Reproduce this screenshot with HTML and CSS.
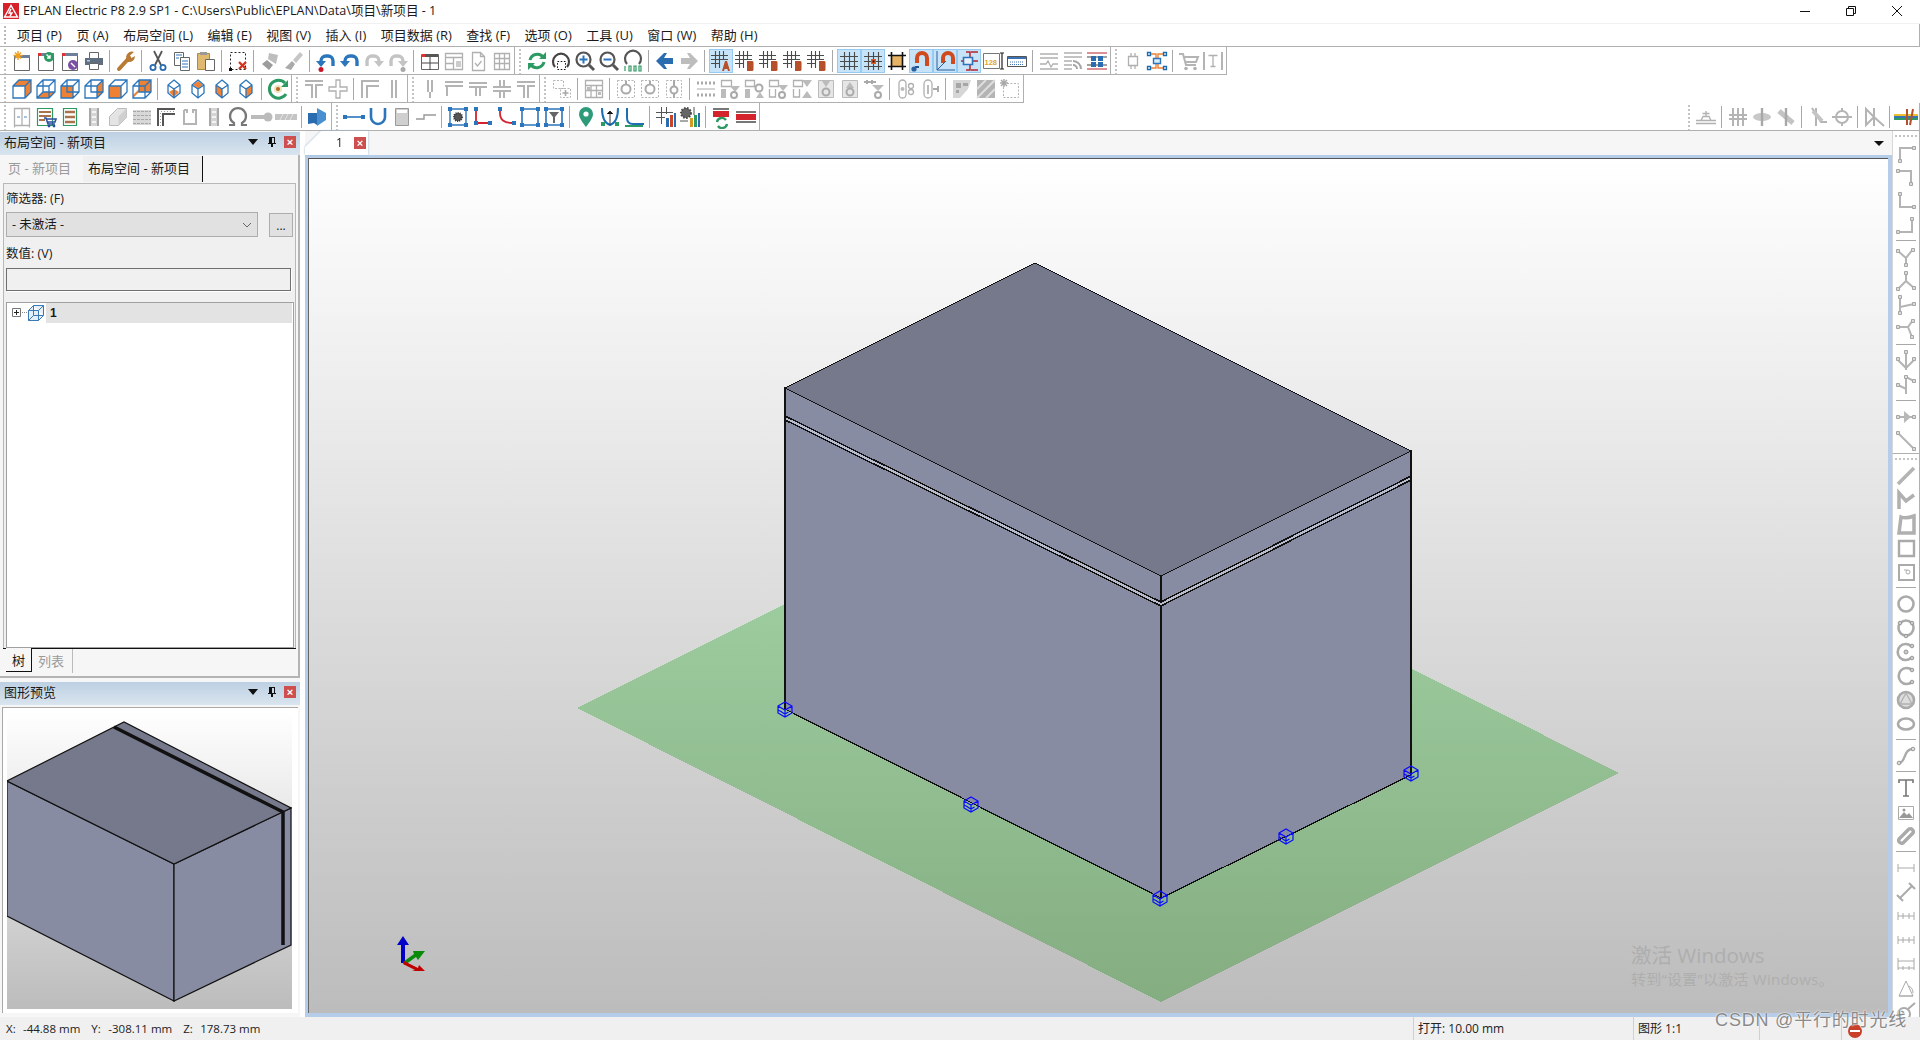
FILE: index.html
```html
<!DOCTYPE html>
<html lang="zh">
<head>
<meta charset="utf-8">
<title>EPLAN Electric P8</title>
<link rel="stylesheet" href="styles.css">
</head>
<body>
<svg class="defs" aria-hidden="true">
<defs>
<symbol id="new" viewBox="0 0 24 24"><path class="wf" d="M4.500 6.500h15v15h-15z"/><path fill="#6d7f99" d="M4 6h16v3H4z"/><path stroke="#f0a020" stroke-width="1.400" d="M8 2v9M3.500 6.500h9M5 3.500l6 6M11 3.500l-6 6"/></symbol>
<symbol id="open" viewBox="0 0 24 24"><path class="wf" d="M4.500 4.500h15v17h-15z"/><path fill="#6d7f99" d="M4 4h16v3H4z"/><path fill="#d33" d="M4 4h3v3H4z"/><circle cx="15" cy="8" r="5" fill="#2d9a63"/><path stroke="#fff" stroke-width="1.400" d="M12.500 5.500L16 9m0-3v3h-3"/></symbol>
<symbol id="conf" viewBox="0 0 24 24"><path class="wf" d="M4.500 4.500h15v17h-15z"/><path fill="#6d7f99" d="M4 4h16v3H4z"/><path fill="#d33" d="M4 4h3v3H4z"/><circle cx="15" cy="16" r="5" fill="#7b4fa3"/><path stroke="#fff" stroke-width="1.400" d="M13 14l4 4"/></symbol>
<symbol id="print" viewBox="0 0 24 24"><path class="wf" d="M7.500 3.500h9v6h-9z"/><path fill="#5f6f7f" d="M3 9h18v7H3z"/><path class="wf" d="M7.500 14.500h9v6h-9z"/><path fill="#9fd0f0" d="M5 11h3v1.500H5z"/></symbol>
<symbol id="wrench" viewBox="0 0 24 24"><path fill="none" stroke="#b97a33" stroke-width="4" stroke-linecap="round" d="M5 20L15 9"/><path fill="#b97a33" d="M12 8a6 6 0 0 1 8-5l-4 3.500 1.500 2.500 3.500-2a6 6 0 0 1-7 6z"/></symbol>
<symbol id="cut" viewBox="0 0 24 24"><path stroke="#555" stroke-width="1.800" d="M8 2l7 14M16 2L9 16"/><circle cx="7" cy="18.500" r="2.600" fill="none" stroke="#2a6cb0" stroke-width="1.800"/><circle cx="17" cy="18.500" r="2.600" fill="none" stroke="#2a6cb0" stroke-width="1.800"/></symbol>
<symbol id="copy" viewBox="0 0 24 24"><path class="wf" d="M4.500 3.500h9v13h-9z"/><path class="wf" d="M10.500 8.500h9v13h-9z"/><path stroke="#2a75bb" d="M6 6h6M6 9h3M12 12h6M12 15h6M12 18h6"/></symbol>
<symbol id="paste" viewBox="0 0 24 24"><path fill="#e0b870" stroke="#b08a40" d="M3.500 4.500h12v16h-12z"/><path fill="#999" d="M6 3h7v3H6z"/><path class="wf" d="M11.500 10.500h9v11h-9z"/></symbol>
<symbol id="seldel" viewBox="0 0 24 24"><path fill="none" stroke="#222" stroke-dasharray="2 2" d="M4.500 3.500h15v17h-15z"/><path stroke="#d4341f" stroke-width="2.400" d="M13 13l7 7M20 13l-7 7"/><path fill="#111" d="M3 19h3v3H3z"/></symbol>
<symbol id="br1" viewBox="0 0 24 24"><path fill="#bdbdbd" d="M11 4l9 2-2 9-8-5z"/><path fill="#9c9c9c" d="M9 11l6 5-4 5-7-6z"/></symbol>
<symbol id="br2" viewBox="0 0 24 24"><path fill="#c6c6c6" d="M18 3l3 3-7 8-3-3z"/><path fill="#aaa" d="M10 12l3 3-4 6-6-2z"/></symbol>
<symbol id="undo" viewBox="0 0 24 24"><path fill="none" stroke="#2a75bb" stroke-width="3.400" d="M7 13v-1a5 5 0 0 1 5-5h2a5 5 0 0 1 5 5v5"/><path fill="#2a75bb" d="M2 12h10l-5 6z"/></symbol>
<symbol id="undod" viewBox="0 0 24 24"><path fill="none" stroke="#2a75bb" stroke-width="3.400" d="M7 13v-1a5 5 0 0 1 5-5h2a5 5 0 0 1 5 5v5"/><path fill="#2a75bb" d="M2 12h10l-5 6z"/><circle cx="7" cy="20.500" r="2.500" fill="#c9142a"/></symbol>
<symbol id="redo" viewBox="0 0 24 24"><path fill="none" stroke="#c4c4c4" stroke-width="3.400" d="M17 13v-1a5 5 0 0 0-5-5h-2a5 5 0 0 0-5 5v5"/><path fill="#c4c4c4" d="M22 12H12l5 6z"/></symbol>
<symbol id="redod" viewBox="0 0 24 24"><path fill="none" stroke="#c4c4c4" stroke-width="3.400" d="M17 13v-1a5 5 0 0 0-5-5h-2a5 5 0 0 0-5 5v5"/><path fill="#c4c4c4" d="M22 12H12l5 6z"/><circle cx="17" cy="20.500" r="2.500" fill="#aaa"/></symbol>
<symbol id="w1" viewBox="0 0 24 24"><path class="wf" d="M3.500 5.500h17v15h-17z"/><path fill="#555" d="M4 5h16v3H4z"/><path fill="#d33" d="M4 5h3v3H4z"/><path stroke="#444" d="M12 8v13M4 14h16"/></symbol>
<symbol id="w2" viewBox="0 0 24 24"><path class="gl1" d="M3.500 4.500h17v16h-17zM3.500 8.500h17M11.500 8.500v12M3.500 14.500h8"/><path fill="#ccc" d="M14 12h5v6h-5z"/></symbol>
<symbol id="pgchk" viewBox="0 0 24 24"><path class="gl1" d="M6.500 3.500h8l4 4v14h-12zM14.500 3.500v4h4M9 14l2.500 3 4-5"/></symbol>
<symbol id="tbl" viewBox="0 0 24 24"><path class="gl1" d="M4.500 4.500h15v16h-15zM4.500 9.500h15M4.500 14.500h15M9.500 4.500v16M14.500 4.500v16"/></symbol>
<symbol id="ref" viewBox="0 0 24 24"><path fill="none" stroke="#2d9a63" stroke-width="3" d="M5 11a7.500 7.500 0 0 1 13-3M19 13a7.500 7.500 0 0 1-13 3"/><path fill="#2d9a63" d="M21 3v7h-7zM3 21v-7h7z"/></symbol>
<symbol id="zw" viewBox="0 0 24 24"><path fill="none" stroke="#444" stroke-width="2.200" d="M6 18a8 8 0 1 1 12 0"/><path fill="none" stroke="#111" stroke-dasharray="1.600 1.600" d="M8.500 12.500h8v8h-8z"/></symbol>
<symbol id="zi" viewBox="0 0 24 24"><circle cx="10.500" cy="10.500" r="7" fill="#fff" stroke="#555" stroke-width="2.200"/><path stroke="#555" stroke-width="3" d="M16 16l5 5"/><path stroke="#2a75bb" stroke-width="2" d="M10.500 6.500v8M6.500 10.500h8"/></symbol>
<symbol id="zo" viewBox="0 0 24 24"><circle cx="10.500" cy="10.500" r="7" fill="#fff" stroke="#555" stroke-width="2.200"/><path stroke="#555" stroke-width="3" d="M16 16l5 5"/><path stroke="#2a75bb" stroke-width="2" d="M6.500 10.500h8"/></symbol>
<symbol id="z100" viewBox="0 0 24 24"><path fill="none" stroke="#555" stroke-width="2.200" d="M6 15a8 8 0 1 1 12 0"/><path stroke="#2d9a63" stroke-width="1.200" d="M4 17v5M8 17h2v5H8zM13 17h2v5h-2zM18 17h2v5h-2z" fill="none"/></symbol>
<symbol id="back" viewBox="0 0 24 24"><path fill="#2a6cb0" d="M3 12l8-8h3l-3 5h9v6h-9l3 5h-3z"/></symbol>
<symbol id="fwd" viewBox="0 0 24 24"><path fill="#bdbdbd" d="M21 12l-8-8h-3l3 5H4v6h9l-3 5h3z"/></symbol>
<symbol id="grd" viewBox="0 0 24 24"><path class="dk" d="M7.500 3v18M12.500 3v18M17.500 3v18M3 7.500h18M3 12.500h18M3 17.500h18"/></symbol>
<symbol id="ga" viewBox="0 0 24 24"><path class="dk" d="M6.500 2v17M10.500 2v17M14.500 2v8M2 6.500h17M2 10.500h17M2 14.500h9"/><path fill="#b5502a" d="M13 22l3-10h2l3 10h-2l-.6-2h-2.800l-.6 2z"/></symbol>
<symbol id="gb" viewBox="0 0 24 24"><path class="dk" d="M6.500 2v17M10.500 2v17M14.500 2v8M2 6.500h17M2 10.500h17M2 14.500h9"/><path fill="#b5502a" d="M14 12h5.500l1 1v8l-1 1H14z"/></symbol>
<symbol id="grs" viewBox="0 0 24 24"><path class="dk" d="M7.500 3v18M12.500 3v18M17.500 3v18M3 7.500h18M3 12.500h18M3 17.500h18"/><path fill="#e8561f" d="M10 10h5v5h-5z"/><path fill="#111" d="M11.500 11.500h2v2h-2z"/></symbol>
<symbol id="sq" viewBox="0 0 24 24"><path fill="#e6b264" stroke="#111" stroke-width="1.600" d="M6.500 6.500h11v11h-11z"/><path stroke="#111" stroke-width="1.600" d="M6.500 3v3M17.500 3v3M6.500 18v3M17.500 18v3M3 6.500h3M3 17.500h3M18 6.500h3M18 17.500h3"/></symbol>
<symbol id="mg1" viewBox="0 0 24 24"><path fill="none" stroke="#cf4a1f" stroke-width="4" d="M8 14V9a5 5 0 0 1 10 0v8"/><path fill="#2a4f8f" d="M6 17h4v2H6z"/><circle cx="5" cy="20" r="2.600" fill="#2a5fa0"/></symbol>
<symbol id="mg2" viewBox="0 0 24 24"><path fill="none" stroke="#cf4a1f" stroke-width="4" d="M10 14V9a5 5 0 0 1 10 0v6"/><path fill="none" stroke="#2a5fa0" d="M4 2v19h18M4 21l9-9"/></symbol>
<symbol id="mg3" viewBox="0 0 24 24"><path fill="none" stroke="#b8232c" stroke-width="1.500" d="M9 3h4v6M9 21h4v-6M14 3h7M14 21h7M15 12h6M4 12h2"/><path fill="#e8f2fb" stroke="#2a75bb" stroke-width="1.600" d="M6.500 8.500h9v7h-9z"/></symbol>
<symbol id="n128" viewBox="0 0 24 24"><path fill="#fff" stroke="#777" d="M2.500 4.500h16v15h-16z"/><text x="3.500" y="15.500" class="tiny">128</text><path stroke="#222" stroke-width="1.200" d="M21 4v16M19 4h4M19 20h4"/></symbol>
<symbol id="kbd" viewBox="0 0 24 24"><path fill="#fff" stroke="#555" d="M2.500 7.500h19v10h-19z"/><path fill="#3a74b4" d="M3 8h18v2H3z"/><path stroke="#3a74b4" stroke-dasharray="1 1" d="M5 13h14M5 15.500h14"/></symbol>
<symbol id="d1" viewBox="0 0 24 24"><path class="gl1" d="M3 5h18M3 9h18M3 20h18M3 15h6l2-3 3 6 2-3h5"/></symbol>
<symbol id="d2" viewBox="0 0 24 24"><path class="gl1" d="M3 4h18M3 8h18M3 12h8M3 16h8M3 20h8"/><path fill="none" stroke="#a4a4a4" stroke-width="2" d="M12 12a8 8 0 0 1 8 8M12 16a4 4 0 0 1 4 4"/></symbol>
<symbol id="d3" viewBox="0 0 24 24"><path stroke="#b8232c" d="M2 4h20M2 20h20"/><path stroke="#444" d="M2 8h20M2 16h20"/><path fill="#2a6cb0" d="M6 7h5v5H6zM13 7h5v5h-5zM6 13h5v5H6zM13 13h5v5h-5z"/></symbol>
<symbol id="chip" viewBox="0 0 24 24"><path class="gl1" d="M7.500 7.500h9v9h-9zM10 4v3M14 4v3M10 17v3M14 17v3"/></symbol>
<symbol id="node" viewBox="0 0 24 24"><path fill="none" stroke="#ee8133" stroke-width="1.400" d="M6 5h5v4M18 5h-5v4M6 19h5v-4M18 19h-5v-4"/><path fill="#d9ecfa" stroke="#2a75bb" stroke-width="1.400" d="M8.500 9.500h7v5h-7z"/><path fill="#fff" stroke="#1d69ae" stroke-width="1.300" d="M2.500 3.500h3v3h-3zM18.500 3.500h3v3h-3zM2.500 17.500h3v3h-3zM18.500 17.500h3v3h-3z"/></symbol>
<symbol id="cart" viewBox="0 0 24 24"><path class="gl" d="M2 5h4l3 11h10M6 8h15l-2 5H8"/><circle cx="9" cy="19.500" r="1.800" fill="#b0b0b0"/><circle cx="18" cy="19.500" r="1.800" fill="#b0b0b0"/></symbol>
<symbol id="tt" viewBox="0 0 24 24"><path class="gl" d="M3 3v18M21 3v18"/><path class="gl1" d="M7.500 6.500h9M12 6.500v11M9.500 17.500h5"/></symbol>
<symbol id="c1" viewBox="0 0 24 24"><path fill="#ee8133" d="M3 9l6-6h12l-6 6zM15 9l6-6v12l-6 6z"/><path class="bl" d="M3 9l6-6h12v12l-6 6H3zM3 9h12v12M15 9l6-6"/></symbol>
<symbol id="c2" viewBox="0 0 24 24"><path fill="#ee8133" d="M3 21l6-6h12l-6 6z"/><path class="bl" d="M3 9l6-6h12v12l-6 6H3zM3 9h12v12M15 9l6-6M9 3v12M3 21l6-6h12"/></symbol>
<symbol id="c3" viewBox="0 0 24 24"><path fill="#ee8133" d="M3 9h12v12H3z"/><path class="bl" d="M3 9l6-6h12v12l-6 6H3zM3 9h12v12M15 9l6-6M9 3v12h12"/></symbol>
<symbol id="c4" viewBox="0 0 24 24"><path fill="#ee8133" d="M15 9l6-6v12l-6 6z"/><path class="bl" d="M3 9l6-6h12v12l-6 6H3zM3 9h12v12M15 9l6-6M9 3v12h12"/></symbol>
<symbol id="c5" viewBox="0 0 24 24"><path fill="#ee8133" d="M3 9h12v12H3z"/><path class="bl" d="M3 9l6-6h12v12l-6 6H3zM3 9h12v12M15 9l6-6"/></symbol>
<symbol id="c6" viewBox="0 0 24 24"><path fill="#ee8133" d="M9 3h12v12H9zM3 21l6-6v-3l-6 6z"/><path class="bl" d="M3 9l6-6h12v12l-6 6H3zM3 9h12v12M15 9l6-6M9 3v12h12"/></symbol>
<symbol id="h1" viewBox="0 0 24 24"><path fill="#ee8133" d="M12 12l5 3-5 5-5-5z"/><path class="bl" d="M12 3l6 5v8l-6 5-6-5V8zM6 8l6 4 6-4M12 12v9"/></symbol>
<symbol id="h2" viewBox="0 0 24 24"><path fill="#ee8133" d="M12 4l5 4-5 3.500-5-3.500z"/><path class="bl" d="M12 3l6 5v8l-6 5-6-5V8zM6 8l6 4 6-4M12 12v9"/></symbol>
<symbol id="h3" viewBox="0 0 24 24"><path fill="#ee8133" d="M12 12v9l-6-5V8z"/><path class="bl" d="M12 3l6 5v8l-6 5-6-5V8zM6 8l6 4 6-4M12 12v9"/></symbol>
<symbol id="h4" viewBox="0 0 24 24"><path fill="#ee8133" d="M12 12v9l6-5V8z"/><path class="bl" d="M12 3l6 5v8l-6 5-6-5V8zM6 8l6 4 6-4M12 12v9"/></symbol>
<symbol id="eye" viewBox="0 0 24 24"><path fill="none" stroke="#2d9a63" stroke-width="3" d="M19 6a9 9 0 1 0 1 11"/><path fill="#2d9a63" d="M22 3v7h-7z"/><circle cx="12" cy="12" r="4" fill="#efe3c2"/><circle cx="12" cy="12" r="2" fill="#b5681f"/></symbol>
<symbol id="gT" viewBox="0 0 24 24"><path class="gl" d="M3 4h18M3 8h7v13M21 8h-7v13"/></symbol>
<symbol id="gP" viewBox="0 0 24 24"><path class="gl1" d="M10 3h4v7h7v4h-7v7h-4v-7H3v-4h7z"/></symbol>
<symbol id="gL" viewBox="0 0 24 24"><path class="gl" d="M4 21V4h17M9 21V9h12"/></symbol>
<symbol id="gI" viewBox="0 0 24 24"><path class="gl" d="M10 3v18M14 3v18"/></symbol>
<symbol id="i1" viewBox="0 0 24 24"><path class="gl" d="M10 3v12M14 3v12M12 15v6"/></symbol>
<symbol id="i2" viewBox="0 0 24 24"><path class="gl" d="M3 5h18M3 9h18M5 9v10"/></symbol>
<symbol id="i3" viewBox="0 0 24 24"><path class="gl" d="M3 6h18M3 10h18M10 10v9M14 10v9"/></symbol>
<symbol id="i4" viewBox="0 0 24 24"><path class="gl" d="M3 10h18M3 14h18M10 3v7M14 3v7M10 14v7M14 14v7"/></symbol>
<symbol id="i5" viewBox="0 0 24 24"><path class="gl" d="M3 5h18M3 9h7v12M21 9h-7v12"/></symbol>
<symbol id="b1" viewBox="0 0 24 24"><path class="gd" d="M3.500 3.500h10v8h-10zM10.500 11.500h10v9h-10z"/><path stroke="#a8a8a8" stroke-width="1.600" d="M15.500 13v6M12.500 16h6"/></symbol>
<symbol id="b2" viewBox="0 0 24 24"><path class="gl1" d="M3.500 3.500h17v17h-17zM3.500 8.500h17M3.500 13.500h17M9 8.500v12M14.500 8.500v12"/><path fill="#bbb" d="M5 10h3v3H5zM16 15h3v3h-3z"/></symbol>
<symbol id="b3" viewBox="0 0 24 24"><path class="gd" d="M3.500 3.500h17v17h-17z"/><circle cx="12" cy="12" r="4.500" fill="none" stroke="#aaa" stroke-width="2"/><path stroke="#aaa" stroke-width="2" d="M12 4v3"/></symbol>
<symbol id="b4" viewBox="0 0 24 24"><path class="gd" d="M4.500 3.500h15v17h-15z"/><circle cx="12" cy="13" r="3.500" fill="none" stroke="#aaa" stroke-width="2"/><path stroke="#aaa" stroke-width="2" d="M12 3v6M12 17v4"/></symbol>
<symbol id="m1" viewBox="0 0 24 24"><path stroke="#aaa" stroke-width="3" stroke-dasharray="2 2" d="M3 6h18M3 18h18"/><path stroke="#aaa" d="M3 12h18"/></symbol>
<symbol id="m2" viewBox="0 0 24 24"><path class="gl1" d="M3.500 3.500h10v6h-10z"/><path fill="#bbb" d="M3 12h5v9H3zM12 9h10l-5 6z"/><circle cx="16" cy="18" r="3" fill="none" stroke="#aaa" stroke-width="2"/></symbol>
<symbol id="m3" viewBox="0 0 24 24"><path class="gl1" d="M3.500 3.500h9v6h-9z"/><path fill="#bbb" d="M3 12h5v9H3zM14 21h8l-4-6z"/><circle cx="17" cy="11" r="3.500" fill="none" stroke="#aaa" stroke-width="2"/></symbol>
<symbol id="m4" viewBox="0 0 24 24"><path class="gl1" d="M3.500 3.500h9v6h-9zM3.500 12v8h6v-8"/><path fill="#bbb" d="M12 8h10l-5 6z"/><circle cx="16" cy="18" r="3" fill="none" stroke="#aaa" stroke-width="2"/></symbol>
<symbol id="m5" viewBox="0 0 24 24"><path class="gl1" d="M3.500 3.500h9v6h-9zM3.500 12v8h6v-8"/><path fill="#bbb" d="M12 3h10l-5 7zM12 21h10l-5-7z"/></symbol>
<symbol id="m6" viewBox="0 0 24 24"><path fill="#e6e6e6" stroke="#bbb" d="M4.500 3.500h15v17h-15z"/><path fill="#bbb" d="M8 4h8l-4 6z"/><circle cx="12" cy="15" r="3.500" fill="none" stroke="#aaa" stroke-width="2"/></symbol>
<symbol id="m7" viewBox="0 0 24 24"><path fill="#e6e6e6" stroke="#bbb" d="M4.500 3.500h15v17h-15z"/><path fill="#bbb" d="M8 11h8l-4-6z"/><circle cx="12" cy="15" r="3.500" fill="none" stroke="#aaa" stroke-width="2"/></symbol>
<symbol id="m8" viewBox="0 0 24 24"><path stroke="#aaa" stroke-width="2" d="M2 5h12M5 3v4M10 3v4"/><path fill="#bbb" d="M10 8h12l-6 6z"/><circle cx="16" cy="18" r="3" fill="none" stroke="#aaa" stroke-width="2"/></symbol>
<symbol id="m9" viewBox="0 0 24 24"><rect x="5" y="3" width="7" height="18" rx="3.500" class="gl1"/><circle cx="8.500" cy="12" r="2" fill="#bbb"/><circle cx="17" cy="9" r="2.500" class="gl1"/><circle cx="17" cy="15" r="2.500" class="gl1"/></symbol>
<symbol id="m10" viewBox="0 0 24 24"><rect x="6" y="3" width="8" height="18" rx="4" class="gl1"/><path fill="#bbb" d="M9 8h2v9H9z"/><path stroke="#aaa" stroke-width="2" d="M15 12h6M20 9v6"/></symbol>
<symbol id="m11" viewBox="0 0 24 24"><path fill="#d6d6d6" d="M3 3h18l-3 9-8 9H3z"/><path fill="#a6a6a6" d="M6 6h5v5H6zM13 6h5v3h-5zM6 13h3v3H6z"/></symbol>
<symbol id="m12" viewBox="0 0 24 24"><path fill="#b4b4b4" d="M3 3h18v18H3z"/><path stroke="#dedede" stroke-width="2" d="M3 12L12 3M3 21L21 3M12 21l9-9"/></symbol>
<symbol id="m13" viewBox="0 0 24 24"><path class="gd" d="M5.500 6.500h15v14h-15z"/><path stroke="#aaa" stroke-width="1.500" d="M6 2v8M2 6h8M3 3l6 6M9 3L3 9"/></symbol>
<symbol id="cab" viewBox="0 0 24 24"><path class="gl1" d="M4.500 3.500h15v17h-15zM12 3.500v17M4.500 20.500v2M19.500 20.500v2"/><path stroke="#4a8ac4" d="M7 12h3M14 12h3"/></symbol>
<symbol id="cart2" viewBox="0 0 24 24"><path fill="#fff" stroke="#2d9a63" stroke-width="1.200" d="M3.500 3.500h15v17h-15z"/><path stroke="#a9744d" stroke-width="2" d="M5 7h12M5 11h12M5 15h6"/><path fill="none" stroke="#2a4f9f" stroke-width="1.600" d="M10 13h2l2 6h7M12 14h10l-1 3h-7"/><circle cx="15" cy="21" r="1.400" fill="#2a4f9f"/><circle cx="20" cy="21" r="1.400" fill="#2a4f9f"/></symbol>
<symbol id="rows" viewBox="0 0 24 24"><path fill="#fff" stroke="#2d9a63" stroke-width="1.200" d="M5.500 3.500h13v17h-13z"/><path stroke="#a9744d" stroke-width="2.500" d="M7 7h10M7 12h10M7 17h10"/></symbol>
<symbol id="rail" viewBox="0 0 24 24"><path fill="#d4d4d4" d="M7 3h10v18H7z"/><path stroke="#a8a8a8" stroke-width="2" d="M8 3v18M16 3v18"/><path stroke="#f4f4f4" stroke-width="2" d="M10 7h4M10 12h4M10 17h4"/></symbol>
<symbol id="box3" viewBox="0 0 24 24"><path fill="#e4e4e4" stroke="#bbb" d="M3.500 11.500l8-8h9v9l-8 8h-9z"/><path fill="#d0d0d0" d="M12.500 11.500l8-8v9l-8 8z"/></symbol>
<symbol id="ggrid" viewBox="0 0 24 24"><path fill="#d8d8d8" d="M3 5h18v15H3z"/><path stroke="#a8a8a8" stroke-dasharray="3 1" d="M3 6.500h18M3 10.500h18M3 14.500h18M3 18.500h18"/></symbol>
<symbol id="cblk" viewBox="0 0 24 24"><path fill="none" stroke="#555" stroke-width="2" d="M4 21V4h17M9 21V9h12"/><path fill="none" stroke="#999" stroke-dasharray="1 2" d="M6.500 21V6.500H21"/></symbol>
<symbol id="uu" viewBox="0 0 24 24"><path class="gl" d="M6 5v14h12V5h-3v3M6 5h3v3"/></symbol>
<symbol id="omega" viewBox="0 0 24 24"><path fill="none" stroke="#777" stroke-width="2.200" d="M3 20h5v-2a8 8 0 1 1 8 0v2h5"/></symbol>
<symbol id="pin" viewBox="0 0 24 24"><path stroke="#bbb" stroke-width="4" d="M1 12h14"/><circle cx="18" cy="12" r="4.500" fill="#bbb"/></symbol>
<symbol id="bar" viewBox="0 0 24 24"><path fill="#c4c4c4" d="M1 9h22v6H1z"/><path stroke="#e6e6e6" d="M6 15l3-6M11 15l3-6M16 15l3-6"/></symbol>
<symbol id="puz" viewBox="0 0 24 24"><path fill="#2a6cb0" d="M2 8h9v12l-3-2-6 1z"/><path fill="#4a90d0" d="M11 3l9 5v7l-9 6z"/></symbol>
<symbol id="conn" viewBox="0 0 24 24"><path stroke="#2a75bb" stroke-width="1.600" d="M4 12h16"/><path fill="#2a75bb" d="M1 10h4v4H1zM19 10h4v4h-4z"/></symbol>
<symbol id="uc" viewBox="0 0 24 24"><path fill="none" stroke="#2a75bb" stroke-width="2.600" d="M5 3v9a7 7 0 0 0 14 0V3"/></symbol>
<symbol id="sqg" viewBox="0 0 24 24"><path fill="#cfcfcf" stroke="#999" d="M5.500 3.500h13v17h-13z"/><path fill="#fff" d="M7 5h10v3H7z"/></symbol>
<symbol id="zig" viewBox="0 0 24 24"><path fill="none" stroke="#999" stroke-width="1.400" d="M2 14h8v-4h12"/></symbol>
<symbol id="f1" viewBox="0 0 24 24"><path fill="none" stroke="#2a75bb" stroke-width="1.400" d="M4 4h16v16H4z"/><path fill="#2a75bb" d="M2 2h4v4H2zM18 2h4v4h-4zM2 18h4v4H2zM18 18h4v4h-4z"/><circle cx="12" cy="12" r="4" fill="#555" stroke="#333" stroke-dasharray="1 1" stroke-width="2"/></symbol>
<symbol id="f2" viewBox="0 0 24 24"><path fill="none" stroke="#d4232c" stroke-width="1.800" d="M6 3v15h14"/><path fill="#2a75bb" d="M4 2h4v4H4zM4 16h4v4H4zM18 16h4v4h-4z"/></symbol>
<symbol id="f3" viewBox="0 0 24 24"><path fill="none" stroke="#d4232c" stroke-width="1.800" d="M6 4v4q0 10 12 10h2"/><path fill="#2a75bb" d="M4 2h4v4H4zM18 16h4v4h-4z"/></symbol>
<symbol id="f4" viewBox="0 0 24 24"><path fill="none" stroke="#2a75bb" stroke-width="1.600" d="M4 4h16v16H4z"/><path fill="#2a75bb" d="M2 2h4v4H2zM18 2h4v4h-4zM2 18h4v4H2zM18 18h4v4h-4z"/></symbol>
<symbol id="f5" viewBox="0 0 24 24"><path fill="none" stroke="#2a75bb" stroke-width="1.600" d="M4 4h16v16H4z"/><path fill="#2a75bb" d="M2 2h4v4H2zM18 2h4v4h-4zM2 18h4v4H2zM18 18h4v4h-4z"/><path fill="#666" d="M7 7h10l-4 5v6h-2v-6z"/></symbol>
<symbol id="mp" viewBox="0 0 24 24"><path fill="#2d9a7a" d="M12 2a7 7 0 0 1 7 7c0 4-4 9-7 13-3-4-7-9-7-13a7 7 0 0 1 7-7z"/><circle cx="12" cy="9" r="2.600" fill="#fff"/></symbol>
<symbol id="an1" viewBox="0 0 24 24"><path fill="none" stroke="#1d6eb4" stroke-width="2" d="M4 3c0 9 2 15 8 17 6-2 8-8 8-17"/><path stroke="#333" d="M12 6v14M9 9l3-3 3 3"/><path fill="#2d9a63" d="M3 17h4v4H3zM17 17h4v4h-4z"/></symbol>
<symbol id="an2" viewBox="0 0 24 24"><path fill="none" stroke="#1d6eb4" stroke-width="2" d="M5 3v10q0 6 6 6h11"/><path stroke="#2d9a63" stroke-width="2" d="M3 21h18"/></symbol>
<symbol id="ch1" viewBox="0 0 24 24"><path stroke="#555" d="M7.500 2v17M12.500 2v7M2 7.500h17M2 12.500h9"/><path fill="#2a6cb0" d="M12 13h3v9h-3z"/><path fill="#c9452a" d="M16 10h3v12h-3z"/><path fill="#2a6cb0" d="M20 8h2v14h-2z"/></symbol>
<symbol id="ch2" viewBox="0 0 24 24"><circle cx="8" cy="8" r="5" fill="#666" stroke="#444" stroke-dasharray="1.500 1.500" stroke-width="2"/><path stroke="#555" d="M16 2v8M2 16h8"/><path fill="#d39b24" d="M12 13h3v9h-3z"/><path fill="#2d9a63" d="M16 10h3v12h-3z"/><path fill="#2a6cb0" d="M20 8h2v14h-2z"/></symbol>
<symbol id="rd1" viewBox="0 0 24 24"><path fill="#777" d="M3 3h16v2H3z"/><path fill="#d4232c" d="M3 6h16v6H3z"/><path fill="none" stroke="#2d9a63" stroke-width="2.400" d="M7 17a5 5 0 0 1 9-2M17 19a5 5 0 0 1-9 2"/></symbol>
<symbol id="rd2" viewBox="0 0 24 24"><path fill="#777" d="M2 6h20v2H2zM2 16h20v2H2z"/><path fill="#d4232c" d="M2 9h20v6H2z"/></symbol>
<symbol id="r1" viewBox="0 0 24 24"><path class="gl1" d="M2 18.500h20M2 15.500h20M7 15.500l2-4h6l2 4M12 6v6M8.500 8.500h7"/></symbol>
<symbol id="r2" viewBox="0 0 24 24"><path class="gl" d="M7 3v18M12 3v18M17 3v18M3 10h18M3 14h18"/></symbol>
<symbol id="r3" viewBox="0 0 24 24"><ellipse cx="12" cy="12" rx="9" ry="4" fill="#c8c8c8"/><path stroke="#a8a8a8" stroke-width="2.400" d="M12 3v18"/></symbol>
<symbol id="r4" viewBox="0 0 24 24"><path stroke="#c4c4c4" stroke-width="5" d="M5 6l14 12"/><path stroke="#a8a8a8" stroke-width="2.400" d="M12 3v18"/></symbol>
<symbol id="r5" viewBox="0 0 24 24"><path class="gl" d="M6 3l9 14h6M10 3v18"/><path stroke="#c4c4c4" stroke-width="4" d="M7 6l9 10"/></symbol>
<symbol id="r6" viewBox="0 0 24 24"><circle cx="12" cy="12" r="6" class="gl"/><path class="gl" d="M2 12h20M12 3v4M12 17v4"/></symbol>
<symbol id="r7" viewBox="0 0 24 24"><path class="gl" d="M4 4l8 8-8 8zM12 3v18M12 12l10 9"/></symbol>
<symbol id="r8" viewBox="0 0 24 24"><path fill="#e8c030" d="M0 9h24v2H0z"/><path fill="#3a74b4" d="M0 11h24v2H0z"/><path fill="#2d9a63" d="M0 13h24v2H0z"/><path stroke="#b5502a" stroke-width="2" d="M13 4v16M19 4L16 20"/></symbol>
<symbol id="v1" viewBox="0 0 24 24"><path class="gl" d="M6 19V7h15"/><path class="sq" d="M4.500 18.500h3v3h-3zM18.500 5.500h3v3h-3z"/></symbol>
<symbol id="v2" viewBox="0 0 24 24"><path class="gl" d="M3 6h14v13"/><path class="sq" d="M2.500 4.500h3v3h-3zM15.500 17.500h3v3h-3z"/></symbol>
<symbol id="v3" viewBox="0 0 24 24"><path class="gl" d="M6 5v13h14"/><path class="sq" d="M4.500 3.500h3v3h-3zM18.500 16.500h3v3h-3z"/></symbol>
<symbol id="v4" viewBox="0 0 24 24"><path class="gl" d="M4 19h14V6"/><path class="sq" d="M2.500 17.500h3v3h-3zM16.500 4.500h3v3h-3z"/></symbol>
<symbol id="v5" viewBox="0 0 24 24"><path class="gl" d="M4 6l8 7 7-9M12 13v7"/><path class="sq" d="M2.500 4.500h3v3h-3zM17.500 3.500h3v3h-3zM10.500 18.500h3v3h-3z"/></symbol>
<symbol id="v6" viewBox="0 0 24 24"><path class="gl" d="M12 4v8l8 7M12 12l-8 8"/><path class="sq" d="M10.500 2.500h3v3h-3zM18.500 17.500h3v3h-3zM2.500 18.500h3v3h-3z"/></symbol>
<symbol id="v7" viewBox="0 0 24 24"><path class="gl" d="M6 4v16M6 14l14-3"/><path class="sq" d="M4.500 2.500h3v3h-3zM4.500 18.500h3v3h-3zM18.500 9.500h3v3h-3z"/></symbol>
<symbol id="v8" viewBox="0 0 24 24"><path class="gl" d="M3 10h11l5-7M14 10l4 10"/><path class="sq" d="M2.500 8.500h3v3h-3zM17.500 2.500h3v3h-3zM16.500 18.500h3v3h-3z"/></symbol>
<symbol id="v9" viewBox="0 0 24 24"><path class="gl" d="M12 3v18M3 10l9 9 9-9"/><path class="sq" d="M10.500 1.500h3v3h-3zM2.500 8.500h3v3h-3zM18.500 8.500h3v3h-3z"/></symbol>
<symbol id="v10" viewBox="0 0 24 24"><path class="gl" d="M4 12l8 4V4l8 4M12 16v5"/><path class="sq" d="M2.500 10.500h3v3h-3zM18.500 6.500h3v3h-3zM10.500 2.500h3v3h-3z"/></symbol>
<symbol id="v11" viewBox="0 0 24 24"><path class="gl" d="M3 12h18"/><path fill="#b8b8b8" d="M10 6l7 6-7 6z"/><path class="sq" d="M2.500 10.500h3v3h-3zM18.500 10.500h3v3h-3z"/></symbol>
<symbol id="v12" viewBox="0 0 24 24"><path class="gl" d="M4 4l16 16" stroke-width="3"/><path class="sq" d="M2.500 2.500h3v3h-3zM18.500 18.500h3v3h-3z"/></symbol>
<symbol id="dl" viewBox="0 0 24 24"><path stroke="#b4b4b4" stroke-width="3.500" d="M4 20L20 4"/></symbol>
<symbol id="dp" viewBox="0 0 24 24"><path fill="none" stroke="#b0b0b0" stroke-width="3.500" d="M5 21V5l7 8 8-6"/></symbol>
<symbol id="ds" viewBox="0 0 24 24"><path fill="none" stroke="#b0b0b0" stroke-width="3.500" d="M7 5q5 2 13-1v17H5z"/></symbol>
<symbol id="dr" viewBox="0 0 24 24"><path fill="none" stroke="#aaa" stroke-width="2.400" d="M5 5h15v15H5z"/></symbol>
<symbol id="drc" viewBox="0 0 24 24"><path fill="none" stroke="#aaa" stroke-width="2" d="M5 5h15v15H5z"/><path fill="none" stroke="#aaa" d="M10 10h3M14 10a2 2 0 1 1 0 4 2 2 0 1 1 0-4z"/></symbol>
<symbol id="dc1" viewBox="0 0 24 24"><circle cx="12" cy="12" r="7.500" fill="none" stroke="#aaa" stroke-width="2.600"/></symbol>
<symbol id="dc2" viewBox="0 0 24 24"><circle cx="12" cy="12" r="7.500" fill="none" stroke="#aaa" stroke-width="2.600"/><circle cx="6" cy="7" r="1.800" fill="#ccc" stroke="#999"/><circle cx="18" cy="7" r="1.800" fill="#ccc" stroke="#999"/><circle cx="12" cy="20" r="1.800" fill="#ccc" stroke="#999"/></symbol>
<symbol id="dc3" viewBox="0 0 24 24"><path fill="none" stroke="#aaa" stroke-width="2.600" d="M17 6a8 8 0 1 0 0 12"/><circle cx="12" cy="12" r="2" fill="#ccc" stroke="#999"/><circle cx="18" cy="6" r="1.800" fill="#ccc" stroke="#999"/><circle cx="18" cy="18" r="1.800" fill="#ccc" stroke="#999"/></symbol>
<symbol id="dc4" viewBox="0 0 24 24"><path fill="none" stroke="#aaa" stroke-width="2.600" d="M18 6a8 8 0 1 0 0 12"/><circle cx="18" cy="18" r="1.800" fill="#ccc" stroke="#999"/><circle cx="18" cy="6" r="1.800" fill="#ccc" stroke="#999"/></symbol>
<symbol id="dc5" viewBox="0 0 24 24"><circle cx="12" cy="12" r="8" fill="#ddd" stroke="#aaa" stroke-width="2.600"/><path class="gl1" d="M12 5l-6 11h12z"/></symbol>
<symbol id="de" viewBox="0 0 24 24"><ellipse cx="12" cy="12" rx="8" ry="5.500" fill="none" stroke="#aaa" stroke-width="2.600"/></symbol>
<symbol id="dsp" viewBox="0 0 24 24"><path fill="none" stroke="#aaa" stroke-width="2.400" d="M5 19c7 0 4-14 14-14"/><circle cx="5" cy="19" r="1.800" fill="#ddd" stroke="#999"/><circle cx="19" cy="5" r="1.800" fill="#ddd" stroke="#999"/></symbol>
<symbol id="dT" viewBox="0 0 24 24"><path fill="none" stroke="#777" stroke-width="1.600" d="M5 7V4h14v3M12 4v16M9 20h6"/></symbol>
<symbol id="dim" viewBox="0 0 24 24"><path fill="#fff" stroke="#aaa" d="M4.500 6.500h15v13h-15z"/><path fill="#999" d="M5 18l5-6 3 3 2-2 4 5z"/><circle cx="10" cy="10" r="1.500" fill="#999"/></symbol>
<symbol id="dlk" viewBox="0 0 24 24"><path fill="none" stroke="#aaa" stroke-width="3.400" d="M10 10l-5 5a3 3 0 0 0 4 4l5-5M14 14l5-5a3 3 0 0 0-4-4l-5 5"/></symbol>
<symbol id="m1d" viewBox="0 0 24 24"><path stroke="#aaa" d="M4 8v8M20 8v8M4 12h16"/></symbol>
<symbol id="m2d" viewBox="0 0 24 24"><path stroke="#aaa" stroke-width="2" d="M6 18L18 6"/><path stroke="#aaa" stroke-width="2" d="M3 15l6 6M15 3l6 6"/></symbol>
<symbol id="m3d" viewBox="0 0 24 24"><path stroke="#aaa" d="M4 8v8M9 9v6M15 9v6M20 8v8M4 12h16"/></symbol>
<symbol id="m4d" viewBox="0 0 24 24"><path stroke="#aaa" d="M4 6v12M20 6v12M4 9h16M4 16h16M9 14v4M15 14v4"/></symbol>
<symbol id="m5d" viewBox="0 0 24 24"><path fill="none" stroke="#aaa" d="M5 20L12 5l7 15zM5 20h14"/><path fill="none" stroke="#aaa" d="M15 10a8 8 0 0 1 4 7"/></symbol>
<symbol id="m6d" viewBox="0 0 24 24"><circle cx="10" cy="14" r="6" fill="none" stroke="#aaa" stroke-width="2"/><path stroke="#aaa" stroke-width="2" d="M14 9l7-6"/></symbol>
<symbol id="pinS" viewBox="0 0 12 12"><path fill="#111" d="M3 1h6v6H8V2H6v5H3zM2 7h8v1H2zM5 8h2v3H5z"/></symbol>
<g id="mk" class="mkg"><path d="M-7-3L0-7 7-3V4L0 8-7 4zM-7-3L0 1 7-3M0 1V8M-3.500 3L0 5 3.500 3M-7 1L-3 3"/></g>
<linearGradient id="bg" x1="0" x2="0" y1="0" y2="1"><stop offset="0" stop-color="#fff"/><stop offset="1" stop-color="#bcbcbc"/></linearGradient>
<linearGradient id="grn" gradientUnits="userSpaceOnUse" x1="0" x2="0" y1="600" y2="1002"><stop offset="0" stop-color="#9dcc9f"/><stop offset="1" stop-color="#84ad81"/></linearGradient>
</defs>
</svg>

<header class="titlebar">
  <svg class="logo" viewBox="0 0 16 16"><path fill="#d6202a" d="M0 0h16v16H0z"/><path fill="none" stroke="#fff" stroke-width="1.400" d="M1.500 14L8 2.500 14.500 14zM8 6l-2 4h3l-2 3"/></svg>
  <span class="apptitle">EPLAN Electric P8 2.9 SP1 - C:\Users\Public\EPLAN\Data\项目\新项目 - 1</span>
  <div class="winctl">
    <svg class="wc" viewBox="0 0 46 24"><path stroke="#111" d="M18 11.500h10"/></svg>
    <svg class="wc" viewBox="0 0 46 24"><path fill="none" stroke="#111" d="M18.500 8.500h7v7h-7zM20.500 8.500v-2h7v7h-2"/></svg>
    <svg class="wc" viewBox="0 0 46 24"><path stroke="#111" d="M18 6l10 10M28 6L18 16"/></svg>
  </div>
</header>

<nav class="menubar">
  <span>项目 (P)</span><span>页 (A)</span><span>布局空间 (L)</span><span>编辑 (E)</span><span>视图 (V)</span><span>插入 (I)</span><span>项目数据 (R)</span><span>查找 (F)</span><span>选项 (O)</span><span>工具 (U)</span><span>窗口 (W)</span><span>帮助 (H)</span>
</nav>

<div class="row">
  <div class="bar first"><i class="grip"></i>
    <svg class="ic"><use href="#new"/></svg><svg class="ic"><use href="#open"/></svg><svg class="ic"><use href="#conf"/></svg><svg class="ic"><use href="#print"/></svg><b class="sp"></b>
    <svg class="ic"><use href="#wrench"/></svg><b class="sp"></b>
    <svg class="ic"><use href="#cut"/></svg><svg class="ic"><use href="#copy"/></svg><svg class="ic"><use href="#paste"/></svg><b class="sp"></b>
    <svg class="ic"><use href="#seldel"/></svg><b class="sp"></b>
    <svg class="ic"><use href="#br1"/></svg><svg class="ic"><use href="#br2"/></svg><b class="sp"></b>
    <svg class="ic"><use href="#undod"/></svg><svg class="ic"><use href="#undo"/></svg><svg class="ic"><use href="#redo"/></svg><svg class="ic"><use href="#redod"/></svg><b class="sp"></b>
    <svg class="ic"><use href="#w1"/></svg><svg class="ic"><use href="#w2"/></svg><svg class="ic"><use href="#pgchk"/></svg><svg class="ic"><use href="#tbl"/></svg>
  </div>
  <div class="bar"><i class="grip"></i>
    <svg class="ic"><use href="#ref"/></svg><svg class="ic"><use href="#zw"/></svg><svg class="ic"><use href="#zi"/></svg><svg class="ic"><use href="#zo"/></svg><svg class="ic"><use href="#z100"/></svg><b class="sp"></b>
    <svg class="ic"><use href="#back"/></svg><svg class="ic"><use href="#fwd"/></svg><b class="sp"></b>
    <svg class="ic on"><use href="#ga"/></svg><svg class="ic"><use href="#gb"/></svg><svg class="ic"><use href="#gb"/></svg><svg class="ic"><use href="#gb"/></svg><svg class="ic"><use href="#gb"/></svg><b class="sp"></b>
    <svg class="ic on"><use href="#grd"/></svg><svg class="ic on"><use href="#grs"/></svg><svg class="ic"><use href="#sq"/></svg><svg class="ic on"><use href="#mg1"/></svg><svg class="ic on"><use href="#mg2"/></svg><svg class="ic on"><use href="#mg3"/></svg><svg class="ic"><use href="#n128"/></svg><svg class="ic"><use href="#kbd"/></svg><b class="sp"></b>
    <svg class="ic"><use href="#d1"/></svg><svg class="ic"><use href="#d2"/></svg><svg class="ic"><use href="#d3"/></svg>
  </div>
  <div class="bar"><i class="grip"></i>
    <svg class="ic"><use href="#chip"/></svg><svg class="ic"><use href="#node"/></svg><b class="sp"></b>
    <svg class="ic"><use href="#cart"/></svg><svg class="ic"><use href="#tt"/></svg>
  </div>
</div>

<div class="row">
  <div class="bar"><i class="grip"></i>
    <svg class="ic"><use href="#c1"/></svg><svg class="ic"><use href="#c2"/></svg><svg class="ic"><use href="#c3"/></svg><svg class="ic"><use href="#c4"/></svg><svg class="ic"><use href="#c5"/></svg><svg class="ic"><use href="#c6"/></svg><b class="sp"></b>
    <svg class="ic"><use href="#h1"/></svg><svg class="ic"><use href="#h2"/></svg><svg class="ic"><use href="#h3"/></svg><svg class="ic"><use href="#h4"/></svg><b class="sp"></b>
    <svg class="ic"><use href="#eye"/></svg>
  </div>
  <div class="bar"><i class="grip"></i>
    <svg class="ic"><use href="#gT"/></svg><svg class="ic"><use href="#gP"/></svg><b class="sp"></b>
    <svg class="ic"><use href="#gL"/></svg><svg class="ic"><use href="#gI"/></svg>
  </div>
  <div class="bar"><i class="grip"></i>
    <svg class="ic"><use href="#i1"/></svg><svg class="ic"><use href="#i2"/></svg><svg class="ic"><use href="#i3"/></svg><svg class="ic"><use href="#i4"/></svg><svg class="ic"><use href="#i5"/></svg>
  </div>
  <div class="bar"><i class="grip"></i>
    <svg class="ic"><use href="#b1"/></svg><b class="sp"></b>
    <svg class="ic"><use href="#b2"/></svg><b class="sp"></b>
    <svg class="ic"><use href="#b3"/></svg><svg class="ic"><use href="#b3"/></svg><svg class="ic"><use href="#b4"/></svg><b class="sp"></b>
    <svg class="ic"><use href="#m1"/></svg><svg class="ic"><use href="#m2"/></svg><svg class="ic"><use href="#m3"/></svg><svg class="ic"><use href="#m4"/></svg><svg class="ic"><use href="#m5"/></svg><svg class="ic"><use href="#m6"/></svg><svg class="ic"><use href="#m7"/></svg><svg class="ic"><use href="#m8"/></svg><b class="sp"></b>
    <svg class="ic"><use href="#m9"/></svg><svg class="ic"><use href="#m10"/></svg><b class="sp"></b>
    <svg class="ic"><use href="#m11"/></svg><svg class="ic"><use href="#m12"/></svg><svg class="ic"><use href="#m13"/></svg>
  </div>
</div>

<div class="row last">
  <div class="leftbars">
    <div class="bar"><i class="grip"></i>
      <svg class="ic"><use href="#cab"/></svg><svg class="ic"><use href="#cart2"/></svg><svg class="ic"><use href="#rows"/></svg><svg class="ic"><use href="#rail"/></svg><svg class="ic"><use href="#box3"/></svg><svg class="ic"><use href="#ggrid"/></svg><svg class="ic"><use href="#cblk"/></svg><svg class="ic"><use href="#uu"/></svg><svg class="ic"><use href="#rail"/></svg><svg class="ic"><use href="#omega"/></svg><svg class="ic"><use href="#pin"/></svg><svg class="ic"><use href="#bar"/></svg><b class="sp"></b>
      <svg class="ic"><use href="#puz"/></svg>
    </div>
    <div class="bar"><i class="grip"></i>
      <svg class="ic"><use href="#conn"/></svg><svg class="ic"><use href="#uc"/></svg><svg class="ic"><use href="#sqg"/></svg><svg class="ic"><use href="#zig"/></svg><b class="sp"></b>
      <svg class="ic"><use href="#f1"/></svg><svg class="ic"><use href="#f2"/></svg><svg class="ic"><use href="#f3"/></svg><svg class="ic"><use href="#f4"/></svg><svg class="ic"><use href="#f5"/></svg><b class="sp"></b>
      <svg class="ic"><use href="#mp"/></svg><svg class="ic"><use href="#an1"/></svg><svg class="ic"><use href="#an2"/></svg><b class="sp"></b>
      <svg class="ic"><use href="#ch1"/></svg><svg class="ic"><use href="#ch2"/></svg><b class="sp"></b>
      <svg class="ic"><use href="#rd1"/></svg><svg class="ic"><use href="#rd2"/></svg>
    </div>
  </div>
  <div class="bar endbar"><i class="grip"></i>
    <svg class="ic"><use href="#r1"/></svg><b class="sp"></b>
    <svg class="ic"><use href="#r2"/></svg><svg class="ic"><use href="#r3"/></svg><svg class="ic"><use href="#r4"/></svg><b class="sp"></b>
    <svg class="ic"><use href="#r5"/></svg><svg class="ic"><use href="#r6"/></svg><b class="sp"></b>
    <svg class="ic"><use href="#r7"/></svg><b class="sp"></b>
    <svg class="ic"><use href="#r8"/></svg>
  </div>
</div>

<main class="main">
  <aside class="left">
    <section class="panel tree-panel">
      <div class="ptitle"><span>布局空间 - 新项目</span><i class="tri"></i><svg class="pinic"><use href="#pinS"/></svg><i class="xbtn">×</i></div>
      <div class="tabs"><span class="tab off">页 - 新项目</span><span class="tab act">布局空间 - 新项目</span></div>
      <div class="pbody">
        <label class="lb first-lb">筛选器: (F)</label>
        <div class="filter"><div class="combo"><span>- 未激活 -</span><svg class="chev" viewBox="0 0 10 6"><path fill="none" stroke="#666" d="M1 1l4 4 4-4"/></svg></div><div class="more">...</div></div>
        <label class="lb second-lb">数值: (V)</label>
        <div class="input"></div>
        <div class="tree">
          <div class="node">
            <svg class="exp" viewBox="0 0 18 10"><path fill="#fff" stroke="#777" d="M.5.500h8v8h-8z"/><path stroke="#222" d="M2 4.500h5M4.500 2v5"/><path stroke="#888" stroke-dasharray="1 1" d="M10 4.500h7"/></svg>
            <svg class="cube" viewBox="0 0 16 16"><path fill="#e4eff8" stroke="#3a7ab8" d="M.5 5.500l5-5h10v10l-5 5H.5zM.5 5.500h10v10M10.500 5.500l5-5M5.500.5v10h10M.5 15.500l5-5"/></svg>
            <span class="sel">1</span>
          </div>
        </div>
      </div>
      <div class="btabs"><span class="btab act">树</span><span class="btab off">列表</span></div>
    </section>
    <section class="panel prev-panel">
      <div class="ptitle"><span>图形预览</span><i class="tri"></i><svg class="pinic"><use href="#pinS"/></svg><i class="xbtn">×</i></div>
      <div class="pvframe">
        <svg class="pv" viewBox="7 711 285 298" preserveAspectRatio="none">
          <rect x="7" y="711" width="285" height="298" fill="url(#bg)"/>
          <path class="side" d="M7 781L174 864V1001L7 916z"/>
          <path class="side" d="M174 864L291 808V945L174 1001z"/>
          <path class="topf" d="M7 781L124 722 291 808 174 864z"/>
          <path class="strip" d="M114 727L283 812V945"/>
        </svg>
      </div>
    </section>
  </aside>

  <section class="doc">
    <div class="strip-bar">
      <div class="tabwrap"><div class="doctab"><span>1</span><i class="xbtn dx">×</i></div></div>
      <i class="tri endtri"></i>
    </div>
    <div class="frame">
      <div class="stage">
        <svg class="scene" viewBox="309 159 1579 854" preserveAspectRatio="none">
          <rect x="309" y="159" width="1579" height="854" fill="url(#bg)"/>
          <path class="plane" d="M577 708L1035 479 1619 773 1161 1002z"/>
          <g class="box">
            <path class="side" d="M785 420L1161 606V898L785 709z"/>
            <path class="side" d="M1161 606L1411 480V775L1161 898z"/>
            <path class="side" d="M785 388L1161 576V602L785 416z"/>
            <path class="side" d="M1161 576L1411 451V476L1161 602z"/>
            <path class="gap" d="M785 416L1161 602 1411 476V480L1161 606 785 420z"/>
            <path class="topf" d="M785 388L1035 263 1411 451 1161 576z"/>
          </g>
          <g class="mks">
            <use href="#mk" x="785" y="709"/><use href="#mk" x="971" y="804"/><use href="#mk" x="1160" y="898"/><use href="#mk" x="1286" y="836"/><use href="#mk" x="1411" y="773"/>
          </g>
          <path fill="#0000c8" d="M401 963V945H397L403 936 409 945H405V963z"/>
          <path fill="#0a8a0a" d="M403 962L414 954 413 951 425 951 418 960 416 957 405 965z"/>
          <path fill="#c00000" d="M404 961L418 968 419 965 425 971H412L415 970 403 964z"/>
        </svg>
        <div class="activate"><p class="a1">激活 Windows</p><p class="a2">转到“设置”以激活 Windows。</p></div>
      </div>
    </div>
  </section>

  <aside class="vbars">
    <div class="vbar"><i class="vgrip"></i>
      <svg class="ic"><use href="#v1"/></svg><svg class="ic"><use href="#v2"/></svg><svg class="ic"><use href="#v3"/></svg><svg class="ic"><use href="#v4"/></svg><b class="vs"></b>
      <svg class="ic"><use href="#v5"/></svg><svg class="ic"><use href="#v6"/></svg><svg class="ic"><use href="#v7"/></svg><svg class="ic"><use href="#v8"/></svg><b class="vs"></b>
      <svg class="ic"><use href="#v9"/></svg><svg class="ic"><use href="#v10"/></svg><b class="vs"></b>
      <svg class="ic"><use href="#v11"/></svg><svg class="ic"><use href="#v12"/></svg>
    </div>
    <div class="vbar v2"><i class="vgrip"></i>
      <svg class="ic"><use href="#dl"/></svg><svg class="ic"><use href="#dp"/></svg><svg class="ic"><use href="#ds"/></svg><svg class="ic"><use href="#dr"/></svg><svg class="ic"><use href="#drc"/></svg><b class="vs"></b>
      <svg class="ic"><use href="#dc1"/></svg><svg class="ic"><use href="#dc2"/></svg><svg class="ic"><use href="#dc3"/></svg><svg class="ic"><use href="#dc4"/></svg><svg class="ic"><use href="#dc5"/></svg><svg class="ic"><use href="#de"/></svg><b class="vs"></b>
      <svg class="ic"><use href="#dsp"/></svg><b class="vs"></b>
      <svg class="ic"><use href="#dT"/></svg><svg class="ic"><use href="#dim"/></svg><svg class="ic"><use href="#dlk"/></svg><b class="vs"></b>
      <svg class="ic"><use href="#m1d"/></svg><svg class="ic"><use href="#m2d"/></svg><svg class="ic"><use href="#m3d"/></svg><svg class="ic"><use href="#m3d"/></svg><svg class="ic"><use href="#m4d"/></svg><svg class="ic"><use href="#m5d"/></svg><svg class="ic"><use href="#m6d"/></svg>
    </div>
  </aside>
</main>

<footer class="status">
  <div class="cell coords"><span class="c1">X:</span><span class="c2">-44.88 mm</span><span class="c1">Y:</span><span class="c2">-308.11 mm</span><span class="c1">Z:</span><span class="c2">178.73 mm</span></div>
  <div class="cell w-open">打开: 10.00 mm</div>
  <div class="cell w-scale">图形 1:1</div>
  <div class="cell w-e"></div>
  <div class="cell w-last"><i class="stop"></i></div>
  <div class="csdn">CSDN @平行的时光线</div>
</footer>
</body>
</html>
```

FILE: styles.css
```css
* { box-sizing: border-box; }
html, body { margin: 0; padding: 0; }
body {
  width: 1920px; height: 1040px; overflow: hidden; background: #fff;
  display: flex; flex-direction: column;
  font: 12px/16px "Open Sans", "Noto Sans CJK SC", sans-serif; color: #1a1a1a;
}
i { font-style: normal; }
.defs { width: 0; height: 0; position: absolute; }

/* svg icon paint classes */
.wf { fill: #fff; stroke: #666; }
.gl { fill: none; stroke: #b4b4b4; stroke-width: 2; }
.gl1 { fill: none; stroke: #b0b0b0; stroke-width: 1.3; }
.gd { fill: none; stroke: #b4b4b4; stroke-dasharray: 2 1.5; }
.bl { fill: none; stroke: #2a75bb; stroke-width: 1.3; }
.dk { fill: none; stroke: #4a4a4a; stroke-width: 1.1; }
.sq { fill: #dcdcdc; stroke: #a6a6a6; }
.tiny { font: 700 7.5px "Liberation Sans", sans-serif; fill: #e3a81e; }

/* title + menu */
.titlebar { height: 24px; flex: none; display: flex; align-items: center; border-bottom: 1px solid #f1f1f1; padding-bottom: 1px; }
.logo { width: 16px; height: 16px; margin-left: 3px; margin-right: 4px; }
.apptitle { font-size: 12.6px; }
.winctl { margin-left: auto; display: flex; }
.wc { width: 46px; height: 24px; margin-top: 1px; }
.menubar {
  height: 23px; flex: none; display: flex; align-items: center; gap: 14.5px;
  padding-left: 17px; border-bottom: 1px solid #b0b0b0; border-right: 1px solid #b0b0b0; font-size: 13px;
  background: linear-gradient(#b9b9b9 50%, transparent 50%) 4px 2px / 2px 4px repeat-y;
}

/* tool rows */
.row { height: 28px; flex: none; display: flex; }
.row.last { justify-content: space-between; border-bottom: 1px solid #b0b0b0; }
.leftbars { display: flex; }
.bar {
  height: 28px; display: flex; align-items: center; padding-right: 1px;
  border-right: 1px solid #b0b0b0; border-bottom: 1px solid #b0b0b0;
}
.bar.first { padding-right: 0; }
.row.last .bar { height: 27px; border-bottom: 0; }
.grip { width: 10px; height: 100%; flex: none; background: linear-gradient(#c4c4c4 50%, transparent 50%) 4px 2px / 2px 4px repeat-y; }
.ic { width: 24px; height: 24px; flex: none; display: block; }
.ic.on { background: #c6e3f8; box-shadow: inset 0 0 0 1px #95cbf2; }
.sp { width: 2px; height: 22px; margin: 0 3px; background: #a8a8a8; flex: none; background-clip: content-box; padding-right: 1px; }

/* main */
.main { flex: 1; display: flex; min-height: 0; }
.left { width: 300px; margin-right: 5px; flex: none; display: flex; flex-direction: column; background: #f6f6f6; padding-top: 1px; }
.panel { display: flex; flex-direction: column; }
.tree-panel { height: 546px; border-bottom: 2px solid #b4b4b4; border-right: 2px solid #b4b4b4; width: 300px; }
.prev-panel { flex: 1; margin-top: 4px; min-height: 0; }
.ptitle {
  height: 23px; flex: none; display: flex; align-items: center; padding: 0 4px 3px;
  background: linear-gradient(#bdd0e3, #d9e5ef); font-size: 13px; width: 300px;
}
.ptitle span { margin-right: auto; }
.tri { width: 0; height: 0; border: 5px solid transparent; border-top: 6px solid #111; border-bottom: 0; display: block; }
.pinic { width: 12px; height: 12px; margin: 0 6px 0 8px; }
.xbtn { width: 12px; height: 12px; background: #cd4f4f; color: #fff; font: 700 11px/12px "Liberation Sans", sans-serif; text-align: center; display: block; }
.tabs { height: 28px; flex: none; display: flex; padding: 1px 0 0 8px; }
.tab { font-size: 13px; line-height: 25px; height: 26px; }
.tab.off { color: #9a9a9a; width: 75px; }
.tab.act { width: 120px; padding-left: 5px; background: #f0f0f0; border-right: 1px solid #111; }
.pbody { flex: 1; margin: 0 2px 0 3px; border: 1px solid #b8b8b8; border-bottom: 0; background: #f0f0f0; padding: 0 2px; display: flex; flex-direction: column; min-height: 0; }
.lb { display: block; height: 16px; font-size: 12.5px; }
.first-lb { margin-top: 7px; }
.second-lb { margin-top: 9px; }
.filter { display: flex; margin-top: 5px; height: 25px; }
.combo { width: 252px; height: 25px; background: #e1e1e1; border: 1px solid #adadad; display: flex; align-items: center; justify-content: space-between; padding: 0 5px; font-size: 12.5px; }
.chev { width: 10px; height: 6px; }
.more { width: 24px; height: 24px; margin: 1px 0 0 11px; background: #e1e1e1; border: 1px solid #adadad; text-align: center; line-height: 24px; }
.input { margin-top: 6px; width: 285px; height: 23px; background: #f0f0f0; border: 1px solid #6f6f6f; box-shadow: 1px 1px 0 #fff; flex: none; }
.tree { margin-top: 11px; flex: 1; width: 288px; background: #fff; border: 1px solid #a0a0a0; min-height: 0; }
.node { display: flex; align-items: center; height: 20px; padding-left: 5px; }
.exp { width: 18px; height: 10px; }
.cube { width: 16px; height: 16px; margin-left: -2px; }
.sel { flex: 1; margin-left: 2px; height: 20px; background: #e3e3e3; font-weight: 700; line-height: 20px; padding-left: 4px; margin-right: 1px; font-family: "Liberation Sans", sans-serif; }
.btabs { height: 28px; flex: none; display: flex; padding-left: 3px; border-top: 1px solid #111; margin: 0 2px 0 3px; }
.btab { font-size: 13px; height: 24px; line-height: 24px; }
.btab.act { width: 26px; text-align: center; border-right: 1px solid #111; border-bottom: 1px solid #111; margin-top: -1px; padding-top: 0; background: #f6f6f6; }
.btab.off { width: 41px; padding-left: 6px; color: #9a9a9a; border-right: 1px solid #bbb; }
.pvframe { flex: 1; margin: 2px 2px 4px 2px; background: #fff; border: 1px solid #a8a8a8; border-width: 1px 0 0 1px; padding: 3px 6px 4px 4px; display: flex; min-height: 0; }
.pv { flex: 1; display: block; min-width: 0; }
.side { fill: #888ca3; stroke: #111; stroke-width: 1.2; }
.topf { fill: #76798b; stroke: #111; stroke-width: 1.2; }
.strip { fill: none; stroke: #111; stroke-width: 3.5; }

.doc { flex: 1; display: flex; flex-direction: column; min-width: 0; }
.strip-bar { height: 24px; flex: none; background: #f6f6f6; display: flex; align-items: center; justify-content: space-between; padding-right: 8px; }
.tabwrap { filter: drop-shadow(0 0 1px #9db6d2); height: 24px; }
.doctab { width: 63px; height: 24px; background: #fff; clip-path: polygon(16px 0, 100% 0, 100% 100%, 0 100%, 0 16px); display: flex; align-items: center; padding-left: 31px; gap: 11px; }
.endtri { border-width: 5px 5px 0; }
.frame { flex: 1; display: flex; border-style: solid; border-color: #b5cde8; border-width: 3px 4px 4px 3px; min-height: 0; }
.stage { flex: 1; display: flex; position: relative; border-left: 1px solid #666; border-top: 1px solid #555; min-width: 0; }
.scene { flex: 1; display: block; min-width: 0; }
.plane { fill: url(#grn); shape-rendering: crispEdges; }
.box path { shape-rendering: crispEdges; stroke-width: 1.3; }
.box .gap { fill: #b9bccd; stroke: #111; stroke-width: 1.4; }
.mkg { fill: none; stroke: #0a0aff; stroke-width: 1.2; }
.activate { position: absolute; left: 1322px; top: 783px; color: #aeaeae; }
.activate p { margin: 0; }
.a1 { font-size: 20.5px; line-height: 27px; }
.a2 { font-size: 15px; line-height: 20px; letter-spacing: .25px; }

.vbars { width: 28px; flex: none; overflow: hidden; border-right: 1px solid #b0b0b0; }
.vbar { display: flex; flex-direction: column; align-items: center; border-bottom: 1px solid #b0b0b0; width: 27px; border-left: 1px solid #d8d8d8; padding-right: 1px; }
.vbar.v2 { border-bottom: 0; }
.vgrip { height: 10px; width: 100%; flex: none; background: linear-gradient(90deg, #c4c4c4 50%, transparent 50%) 2px 4px / 4px 2px repeat-x; }
.vs { width: 20px; height: 2px; margin: 3px 0; background: #a8a8a8; flex: none; background-clip: content-box; padding-bottom: 1px; }

/* status */
.status { height: 23px; flex: none; display: flex; position: relative; background: #f0f0f0; line-height: 23px; color: #222; }
.cell { height: 100%; border-left: 1px solid #d0d0d0; padding-left: 4px; }
.coords { flex: 1; border: 0; padding-left: 6px; display: flex; font-size: 11.5px; }
.c1 { width: 17px; }
.c2 { margin-right: 11px; }
.w-open { width: 220px; }
.w-scale { width: 126px; }
.w-e { width: 82px; }
.w-last { width: 79px; padding-left: 6px; }
.stop { display: block; width: 14px; height: 14px; margin-top: 7px; border-radius: 50%; background: #c9402a; position: relative; }
.stop::after { content: ""; position: absolute; left: 2px; right: 2px; top: 6px; height: 2px; background: #fff; }
.csdn { position: absolute; right: 13px; bottom: 9px; font: 18px/22px "Liberation Sans", "Noto Sans CJK SC", sans-serif; color: #8a8a8a; text-shadow: 0 0 2px #fff, 0 0 1px #fff; letter-spacing: .8px; }
```
